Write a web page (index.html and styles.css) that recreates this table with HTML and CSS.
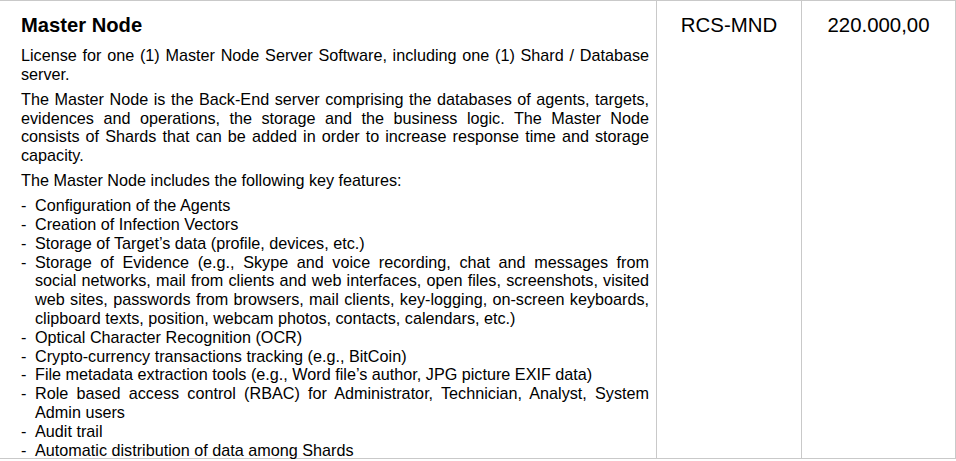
FILE: index.html
```html
<!DOCTYPE html>
<html>
<head>
<meta charset="utf-8">
<link rel="stylesheet" href="styles.css">
</head>
<body>
<div class="row">
  <div class="cell desc">
    <h1 class="title">Master Node</h1>
    <p class="para">License for one (1) Master Node Server Software, including one (1) Shard / Database server.</p>
    <p class="para">The Master Node is the Back-End server comprising the databases of agents, targets, evidences and operations, the storage and the business logic. The Master Node consists of Shards that can be added in order to increase response time and storage capacity.</p>
    <p class="para">The Master Node includes the following key features:</p>
    <ul class="features">
      <li>Configuration of the Agents</li>
      <li>Creation of Infection Vectors</li>
      <li>Storage of Target’s data (profile, devices, etc.)</li>
      <li>Storage of Evidence (e.g., Skype and voice recording, chat and messages from social networks, mail from clients and web interfaces, open files, screenshots, visited web sites, passwords from browsers, mail clients, key-logging, on-screen keyboards, clipboard texts, position, webcam photos, contacts, calendars, etc.)</li>
      <li>Optical Character Recognition (OCR)</li>
      <li>Crypto-currency transactions tracking (e.g., BitCoin)</li>
      <li>File metadata extraction tools (e.g., Word file’s author, JPG picture EXIF data)</li>
      <li>Role based access control (RBAC) for Administrator, Technician, Analyst, System Admin users</li>
      <li>Audit trail</li>
      <li>Automatic distribution of data among Shards</li>
    </ul>
  </div>
  <div class="cell code">RCS-MND</div>
  <div class="cell price">220.000,00</div>
</div>
</body>
</html>
```
FILE: styles.css
```css
html, body {
  margin: 0;
  padding: 0;
  background: #ffffff;
}
body {
  font-family: "Liberation Sans", Arial, sans-serif;
  color: #000000;
  width: 956px;
  height: 461px;
  overflow: hidden;
}
.row {
  display: grid;
  grid-template-columns: 657px 145px 154px;
  border-top: 1px solid #c9c9c9;
  border-bottom: 1px solid #c9c9c9;
  height: 457px;
}
.cell {
  border-right: 1px solid #c9c9c9;
  font-size: 16.2px;
  line-height: 18.8px;
}
.desc {
  padding: 13px 7px 0 21px;
}
.title {
  margin: 0 0 10px 0;
  font-size: 20.2px;
  line-height: 22px;
  font-weight: bold;
}
.para {
  margin: 0 0 6.2px 0;
  text-align: justify;
}
.features {
  margin: 0;
  padding: 0;
  list-style: none;
}
.features li {
  position: relative;
  padding-left: 14px;
  text-align: justify;
}
.features li::before {
  content: "-";
  position: absolute;
  left: 0;
  top: 0;
}
.code, .price {
  text-align: center;
  padding-top: 13px;
  font-size: 20.4px;
  line-height: 22px;
}
```
